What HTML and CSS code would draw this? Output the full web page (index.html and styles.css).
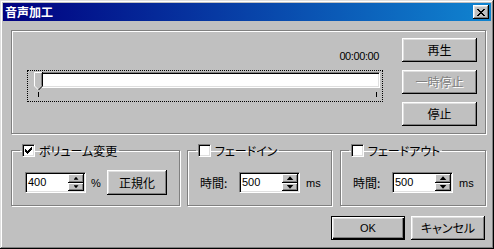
FILE: index.html
```html
<!DOCTYPE html>
<html lang="ja">
<head>
    <meta charset="UTF-8">
    <title>音声加工</title>
    <link rel="stylesheet" href="styles.css">
</head>
<body>

    <div class="window">
        <!-- タイトルバー -->
        <div class="titlebar">
            <span class="title">音声加工</span>
            <button class="close-btn">
                <svg width="8" height="7" viewBox="0 0 8 7"><path d="M0 0h2v1H0z M6 0h2v1H6z M1 1h2v1H1z M5 1h2v1H5z M2 2h4v1H2z M3 3h2v1H3z M2 4h4v1H2z M1 5h2v1H1z M5 5h2v1H5z M0 6h2v1H0z M6 6h2v1H6z" fill="#000"/></svg>
            </button>
        </div>

        <div class="client">
            <!-- 再生 -->
            <div class="player">
                <div class="player-left">
                    <div class="time">00:00:00</div>
                    <div class="trackbar">
                        <div class="channel"></div>
                        <div class="ticks"><span></span><span></span></div>
                        <svg class="thumb" width="9" height="19" viewBox="0 0 9 19">
                            <path d="M0 0H9V14L4.5 18.5L0 14Z" fill="#c0c0c0"/>
                            <path d="M0.5 14V0.5H8" fill="none" stroke="#fff"/>
                            <path d="M0.5 14L4.5 18" fill="none" stroke="#fff"/>
                            <path d="M8.5 0V14L4.5 18" fill="none" stroke="#000"/>
                            <path d="M7.5 1V13.5" fill="none" stroke="#808080"/>
                        </svg>
                    </div>
                </div>
                <div class="player-buttons">
                    <button class="btn">再生</button>
                    <button class="btn" disabled>一時停止</button>
                    <button class="btn">停止</button>
                </div>
            </div>

            <!-- 加工 -->
            <div class="groups">
                <fieldset class="group group-volume">
                    <legend>
                        <span class="check"><svg width="7" height="7" viewBox="0 0 7 7"><path d="M6 0h1v3H6z M5 1h1v3H5z M4 2h1v3H4z M3 3h1v3H3z M2 4h1v3H2z M1 3h1v3H1z M0 2h1v3H0z" fill="#000"/></svg></span>
                        <span>ボリューム変更</span>
                    </legend>
                    <div class="group-row">
                        <div class="spin-edit">
                            <span class="value">400</span>
                            <span class="spinner spinner-small">
                                <span class="spin-btn"><i class="arrow-up"></i></span>
                                <span class="spin-btn"><i class="arrow-down"></i></span>
                            </span>
                        </div>
                        <span class="unit-percent">%</span>
                        <button class="btn btn-normalize">正規化</button>
                    </div>
                </fieldset>

                <fieldset class="group group-fadein">
                    <legend>
                        <span class="check"></span>
                        <span>フェードイン</span>
                    </legend>
                    <div class="group-row">
                        <span class="label">時間:</span>
                        <div class="spin-edit">
                            <span class="value">500</span>
                            <span class="spinner">
                                <span class="spin-btn"><i class="arrow-up"></i></span>
                                <span class="spin-btn"><i class="arrow-down"></i></span>
                            </span>
                        </div>
                        <span class="unit">ms</span>
                    </div>
                </fieldset>

                <fieldset class="group group-fadeout">
                    <legend>
                        <span class="check"></span>
                        <span>フェードアウト</span>
                    </legend>
                    <div class="group-row">
                        <span class="label">時間:</span>
                        <div class="spin-edit">
                            <span class="value">500</span>
                            <span class="spinner">
                                <span class="spin-btn"><i class="arrow-up"></i></span>
                                <span class="spin-btn"><i class="arrow-down"></i></span>
                            </span>
                        </div>
                        <span class="unit">ms</span>
                    </div>
                </fieldset>
            </div>

            <div class="footer">
                <button class="btn btn-default btn-ok">OK</button>
                <button class="btn">キャンセル</button>
            </div>
        </div>
    </div>

</body>
</html>
```

FILE: styles.css
```css
body {
    margin: 0;
    font-family: "Liberation Sans", "Noto Sans CJK JP", sans-serif;
    font-size: 12px;
    font-feature-settings: "palt";
    background: #c0c0c0;
    color: #000;
}

.window {
    width: 494px;
    height: 249px;
    box-sizing: border-box;
    padding: 3px;
    background: #c0c0c0;
    box-shadow: inset -1px -1px #000, inset 1px 1px #dfdfdf, inset -2px -2px #808080, inset 2px 2px #fff;
    display: flex;
    flex-direction: column;
}

.titlebar {
    height: 18px;
    display: flex;
    align-items: center;
    justify-content: space-between;
    padding: 0 2px;
    background: linear-gradient(to right, #000080, #1084d0);
}

.title {
    color: #fff;
    font-family: "Noto Sans CJK JP", sans-serif;
    font-weight: bold;
    font-size: 12px;
    line-height: 18px;
}

.close-btn {
    width: 16px;
    height: 14px;
    padding: 0 1px 0 0;
    border: none;
    background: #c0c0c0;
    box-shadow: inset -1px -1px #000, inset 1px 1px #fff, inset -2px -2px #808080, inset 2px 2px #dfdfdf;
    display: flex;
    align-items: center;
    justify-content: center;
}

.client {
    flex: 1;
    padding: 9px 5px 0 8px;
}

/* エッチング枠 */
.player, .group {
    border: 1px solid #808080;
    box-shadow: 1px 1px 0 #fff, inset 1px 1px 0 #fff;
}

.player {
    width: 475px;
    height: 104px;
    box-sizing: border-box;
    display: flex;
    gap: 19px;
    padding: 7px 8px 0 15px;
}

.player-left {
    width: 356px;
    padding-top: 12px;
}

.time {
    text-align: right;
    padding-right: 4px;
    font-size: 11px;
    line-height: 13px;
    letter-spacing: -0.4px;
}

.trackbar {
    position: relative;
    margin-top: 7px;
    height: 32px;
    box-sizing: border-box;
    border: 1px dotted #000;
}

.channel {
    width: 345px;
    height: 16px;
    box-sizing: border-box;
    margin: 1px 0 0 7px;
    background: #fff;
    border: 1px solid;
    border-color: #808080 #fff #fff #808080;
    box-shadow: inset 1px 1px #000, inset -1px -1px #dfdfdf;
}

.ticks {
    display: flex;
    justify-content: space-between;
    width: 339px;
    height: 5px;
    margin: 4px 0 0 10px;
}

.ticks span {
    width: 1px;
    background: #000;
}

.thumb {
    position: absolute;
    left: 6px;
    top: 1px;
}

.player-buttons {
    display: flex;
    flex-direction: column;
    gap: 8px;
    width: 75px;
}

.btn {
    height: 24px;
    padding: 0;
    border: none;
    background: #c0c0c0;
    font-family: "Noto Sans CJK JP", sans-serif;
    font-size: 12px;
    font-feature-settings: "palt";
    line-height: 14px;
    color: #000;
    box-shadow: inset -1px -1px #000, inset 1px 1px #fff, inset -2px -2px #808080, inset 2px 2px #dfdfdf;
}

.btn:disabled {
    color: #808080;
    text-shadow: 1px 1px 0 #fff;
}

.btn-default {
    border: 1px solid #000;
    box-shadow: inset 1px 1px #fff, inset -1px -1px #000, inset -2px -2px #808080, inset 2px 2px #dfdfdf;
}

.btn-ok {
    font-family: "Liberation Sans", sans-serif;
    font-size: 11px;
}

.groups {
    display: flex;
    margin-top: 10px;
}

.group {
    margin: 0;
    min-width: 0;
    box-sizing: border-box;
    padding: 13px 0 10px 8px;
}

.group-volume {
    width: 169px;
    margin-right: 7px;
}

.group-fadein {
    width: 145px;
    margin-right: 8px;
}

.group-fadeout {
    width: 146px;
}

.group legend {
    display: flex;
    align-items: center;
    height: 13px;
    padding: 0 2px;
    font-family: "Noto Sans CJK JP", sans-serif;
    line-height: 13px;
}

.check {
    width: 13px;
    height: 13px;
    box-sizing: border-box;
    margin-right: 4px;
    background: #fff;
    border: 1px solid;
    border-color: #808080 #fff #fff #808080;
    box-shadow: inset 1px 1px #000, inset -1px -1px #dfdfdf;
    display: flex;
    align-items: center;
    justify-content: center;
}

.group-row {
    display: flex;
    align-items: center;
    height: 25px;
    padding-left: 4px;
}

.group-volume .group-row {
    padding-left: 5px;
}

.label {
    width: 39px;
    font-family: "Noto Sans CJK JP", sans-serif;
}

.spin-edit {
    width: 61px;
    height: 21px;
    box-sizing: border-box;
    display: flex;
    background: #fff;
    border: 1px solid;
    border-color: #808080 #fff #fff #808080;
    box-shadow: inset 1px 1px #000, inset -1px -1px #dfdfdf;
    padding: 1px;
}

.value {
    flex: 1;
    padding-left: 1px;
    font-size: 11px;
    line-height: 16px;
}

.spinner {
    width: 16px;
    display: flex;
    flex-direction: column;
}

.spin-btn {
    flex: 1;
    background: #c0c0c0;
    box-shadow: inset -1px -1px #000, inset 1px 1px #fff, inset -2px -2px #808080;
    display: flex;
    align-items: center;
    justify-content: center;
}

.arrow-up, .arrow-down {
    display: block;
    width: 7px;
    height: 4px;
    background: #000;
}

.arrow-up {
    clip-path: polygon(50% 0, 100% 100%, 0 100%);
}

.arrow-down {
    clip-path: polygon(0 0, 100% 0, 50% 100%);
}

.spinner-small .arrow-up, .spinner-small .arrow-down {
    width: 5px;
    height: 3px;
}

.unit-percent {
    width: 16px;
    margin-left: 5px;
    font-size: 11px;
}

.btn-normalize {
    width: 60px;
    height: 25px;
}

.unit {
    margin-left: 6px;
    font-size: 11px;
}

.footer {
    display: flex;
    justify-content: flex-end;
    gap: 6px;
    margin-top: 10px;
    padding-right: 1px;
}

.footer .btn {
    width: 74px;
}
```
